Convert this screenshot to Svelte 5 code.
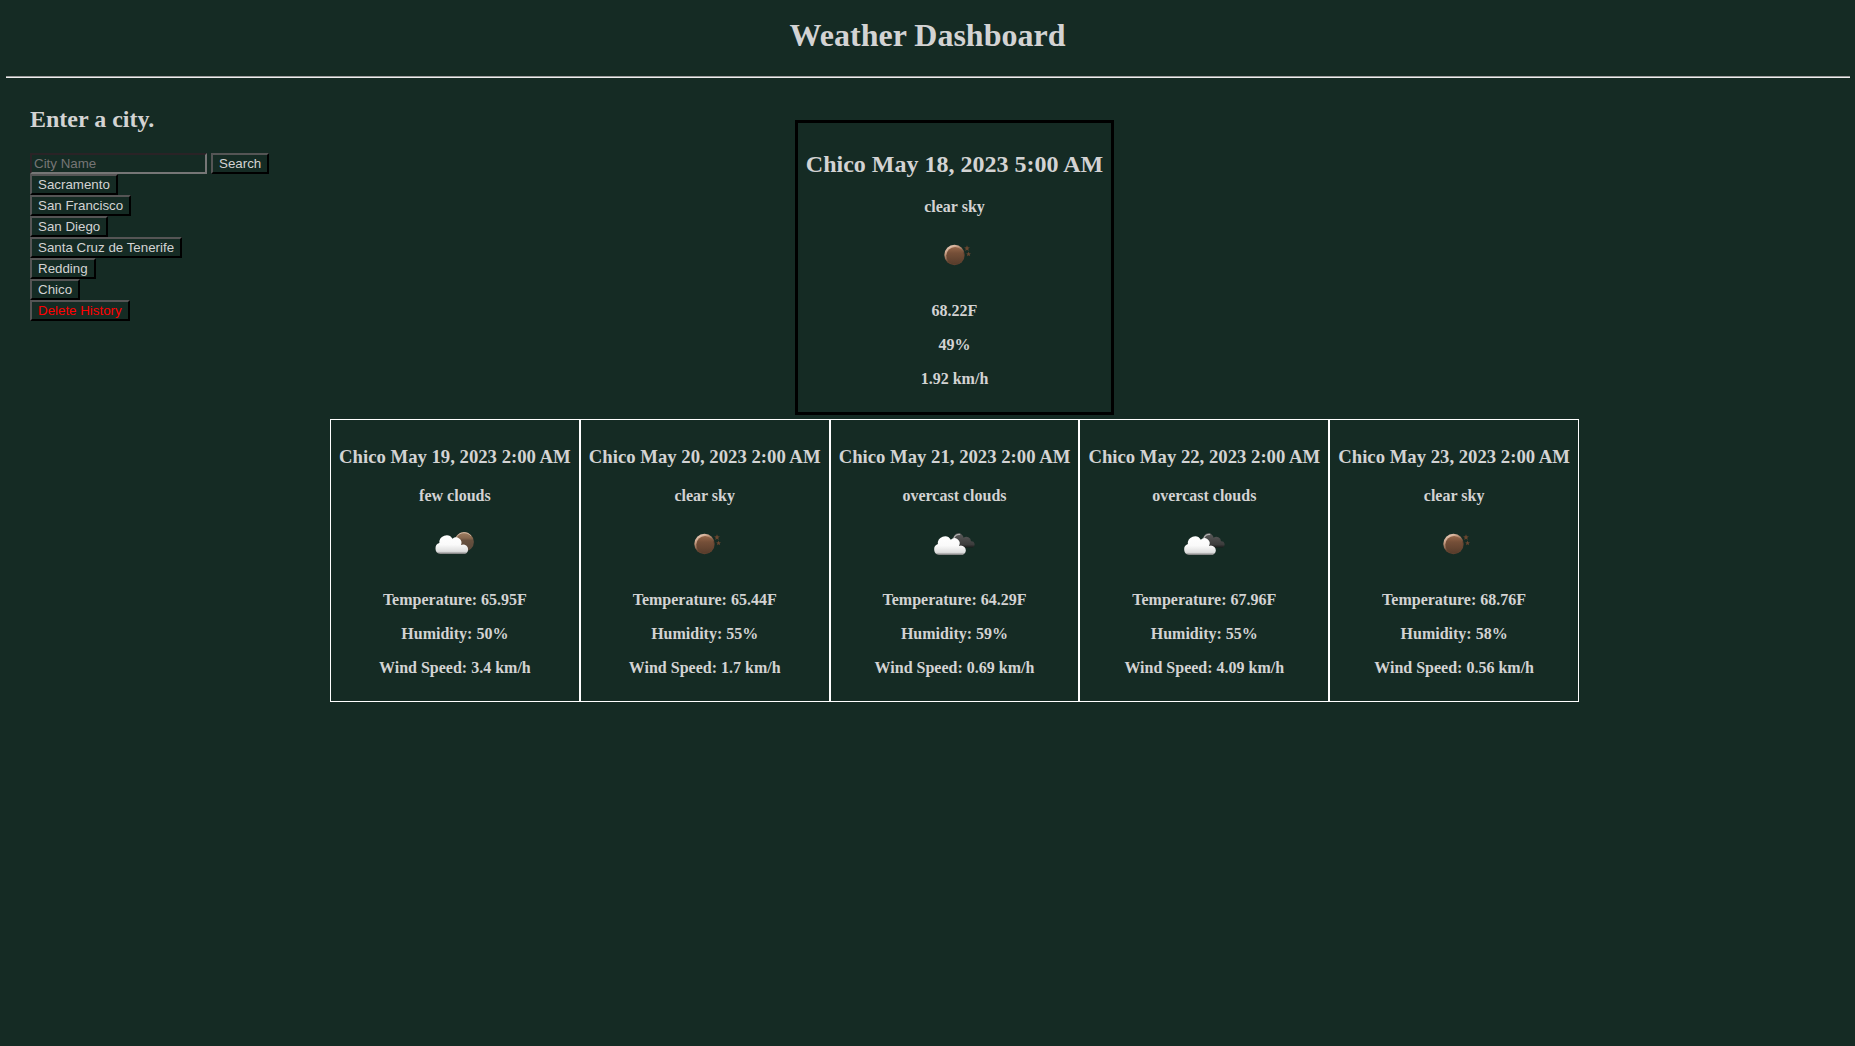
<script>
  const history = ['Sacramento', 'San Francisco', 'San Diego', 'Santa Cruz de Tenerife', 'Redding', 'Chico'];
  const today = { title: 'Chico May 18, 2023 5:00 AM', sky: 'clear sky', icon: 'clear', temp: '68.22F', humidity: '49%', wind: '1.92 km/h' };
  const days = [
    { date: 'May 19', sky: 'few clouds', icon: 'few', temp: '65.95', humidity: 50, wind: '3.4' },
    { date: 'May 20', sky: 'clear sky', icon: 'clear', temp: '65.44', humidity: 55, wind: '1.7' },
    { date: 'May 21', sky: 'overcast clouds', icon: 'overcast', temp: '64.29', humidity: 59, wind: '0.69' },
    { date: 'May 22', sky: 'overcast clouds', icon: 'overcast', temp: '67.96', humidity: 55, wind: '4.09' },
    { date: 'May 23', sky: 'clear sky', icon: 'clear', temp: '68.76', humidity: 58, wind: '0.56' }
  ];
  let city = $state('');
</script>

<svg class="defs" width="0" height="0" aria-hidden="true">
  <defs>
    <linearGradient id="moon" x1="0" y1="0" x2="0" y2="1">
      <stop offset="0" stop-color="#96674a" />
      <stop offset="0.35" stop-color="#754f38" />
      <stop offset="1" stop-color="#573c2b" />
    </linearGradient>
    <linearGradient id="rim" x1="0.15" y1="0" x2="0.6" y2="0.8">
      <stop offset="0" stop-color="#f7ddcc" />
      <stop offset="0.4" stop-color="#c0957a" />
      <stop offset="0.8" stop-color="#634330" />
    </linearGradient>
    <linearGradient id="dimMoon" x1="0" y1="0" x2="0" y2="1">
      <stop offset="0" stop-color="#a18164" />
      <stop offset="0.3" stop-color="#87684f" />
      <stop offset="0.42" stop-color="#68513f" />
      <stop offset="1" stop-color="#574638" />
    </linearGradient>
    <linearGradient id="cloud" x1="0" y1="0" x2="0" y2="1">
      <stop offset="0" stop-color="#fff" />
      <stop offset="0.5" stop-color="#fafafa" />
      <stop offset="0.86" stop-color="#dedede" />
      <stop offset="0.93" stop-color="#aaa" />
      <stop offset="1" stop-color="#777" />
    </linearGradient>
    <linearGradient id="dark" x1="0" y1="0" x2="0" y2="1">
      <stop offset="0" stop-color="#5a5a5a" />
      <stop offset="0.8" stop-color="#3c3c3c" />
      <stop offset="1" stop-color="#1c1c1c" />
    </linearGradient>
  </defs>
</svg>

{#snippet weatherIcon(kind)}
  <svg class="icon" width="50" height="50" viewBox="0 0 50 50" role="img" aria-label={kind}>
    {#if kind === 'clear'}
      <circle cx="24.5" cy="23" r="10.2" fill="url(#rim)" />
      <circle cx="25.1" cy="23.7" r="8.8" fill="url(#moon)" />
      <path fill="#69462f" d="M37 13.3l.8 2 2.1.1-1.7 1.4.6 2.1-1.8-1.2-1.8 1.2.6-2.1-1.7-1.4 2.1-.1z" />
      <path fill="#69462f" d="M38.6 19.6l.6 1.7 1.8.1-1.4 1.1.5 1.8-1.5-1-1.6 1 .5-1.8-1.4-1.1 1.8-.1z" />
    {:else if kind === 'few'}
      <circle cx="34.1" cy="20.9" r="9.8" fill="url(#dimMoon)" />
      <path fill="none" stroke="#d1b9a5" stroke-width="1" d="M25.5 18.4C27 14 30 11.9 34 11.7c3 0 5.2 1.2 6.8 3" />
      <path fill="url(#cloud)" d="M10.2 33A5.5 5.6 0 0 1 9.4 22.1A7.1 7.1 0 0 1 22.5 17.7A5.4 5.4 0 0 1 31 23.9A4.7 4.7 0 0 1 35.2 33Z" />
    {:else}
      <path fill="url(#dark)" d="M24.5 26.4V18A5 5 0 0 1 34.6 16.8A4.6 4.6 0 0 1 42 20.3A3.2 3.2 0 0 1 43.7 26.4Z" />
      <path fill="none" stroke="#b0b0b0" stroke-width="1.3" d="M24.8 17.4C25.4 14.8 28.2 13 31.2 13.5" />
      <path fill="url(#cloud)" d="M10 34A5.4 5.6 0 0 1 8.9 23.1A7 7 0 0 1 21.8 18.7A5.2 5.2 0 0 1 30 24.9A4.6 4.6 0 0 1 33.8 34Z" />
    {/if}
  </svg>
{/snippet}

<header><h1>Weather Dashboard</h1></header>
<div class="rule"></div>
<div class="layout">
  <aside>
    <h2>Enter a city.</h2>
    <div class="search">
      <input type="text" placeholder="City Name" bind:value={city} />
      <button>Search</button>
    </div>
    <div class="history">
      {#each history as name}
        <button>{name}</button>
      {/each}
      <button class="delete">Delete History</button>
    </div>
  </aside>
  <main>
    <section class="card today">
      <h2>{today.title}</h2>
      <p>{today.sky}</p>
      {@render weatherIcon(today.icon)}
      <p>{today.temp}</p>
      <p>{today.humidity}</p>
      <p>{today.wind}</p>
    </section>
    <div class="forecast">
      {#each days as day}
        <section class="card">
          <h3>Chico {day.date}, 2023 2:00 AM</h3>
          <p>{day.sky}</p>
          {@render weatherIcon(day.icon)}
          <p>Temperature: {day.temp}F</p>
          <p>Humidity: {day.humidity}%</p>
          <p>Wind Speed: {day.wind} km/h</p>
        </section>
      {/each}
    </div>
  </main>
</div>

<style>
  :global(body) {
    background: #152b24;
    color: #d3d3d3;
    font-family: 'Liberation Serif', 'Times New Roman', serif;
    font-size: 16px;
  }
  .defs { position: absolute; }
  h1, h2, h3, p { margin: 0; font-weight: bold; }
  header { height: 76px; padding-top: 17px; box-sizing: border-box; text-align: center; }
  h1 { font-size: 32px; line-height: 37px; }
  .rule {
    height: 0;
    margin: 0 5px 0 6px;
    border-top: 1px solid #9a9a9a;
    border-bottom: 1px solid #eee;
  }
  .layout { display: grid; grid-template-columns: 300px 1249px; padding-left: 30px; }
  h2 { font-size: 24px; line-height: 27px; }
  aside { padding-top: 28px; }
  .search { display: flex; gap: 4px; margin-top: 20px; }
  input, button {
    box-sizing: border-box;
    height: 21px;
    margin: 0;
    font: 13.3333px/15px 'Liberation Sans', Arial, sans-serif;
    background: transparent;
    color: #d3d3d3;
    border: 2px solid;
    border-radius: 0;
  }
  input { width: 177px; padding: 1px 2px; border-color: #2a2326 #767676 #767676 #2a2326; outline: none; }
  input::placeholder { color: #757575; opacity: 1; }
  button { padding: 1px 6px; border-color: #555 #000 #000 #555; }
  .history { display: flex; flex-direction: column; align-items: flex-start; }
  .delete { color: #f00; }
  main { display: flex; flex-direction: column; align-items: center; padding-top: 42px; gap: 4px; }
  .card {
    display: flex;
    flex-direction: column;
    align-items: center;
    box-sizing: border-box;
    padding: 8px;
    border: 1px solid #fff;
    white-space: nowrap;
  }
  .card p { line-height: 18px; margin-bottom: 16px; }
  .icon { display: block; margin-bottom: 20px; }
  .today { width: 319px; height: 295px; border: 3px solid #000; }
  .today h2 { margin: 20px 0; }
  .forecast { display: grid; grid-template-columns: repeat(5, 1fr); width: 1249px; height: 283px; }
  h3 { font-size: 18.72px; line-height: 21px; margin: 18px 0 20px; }
</style>
